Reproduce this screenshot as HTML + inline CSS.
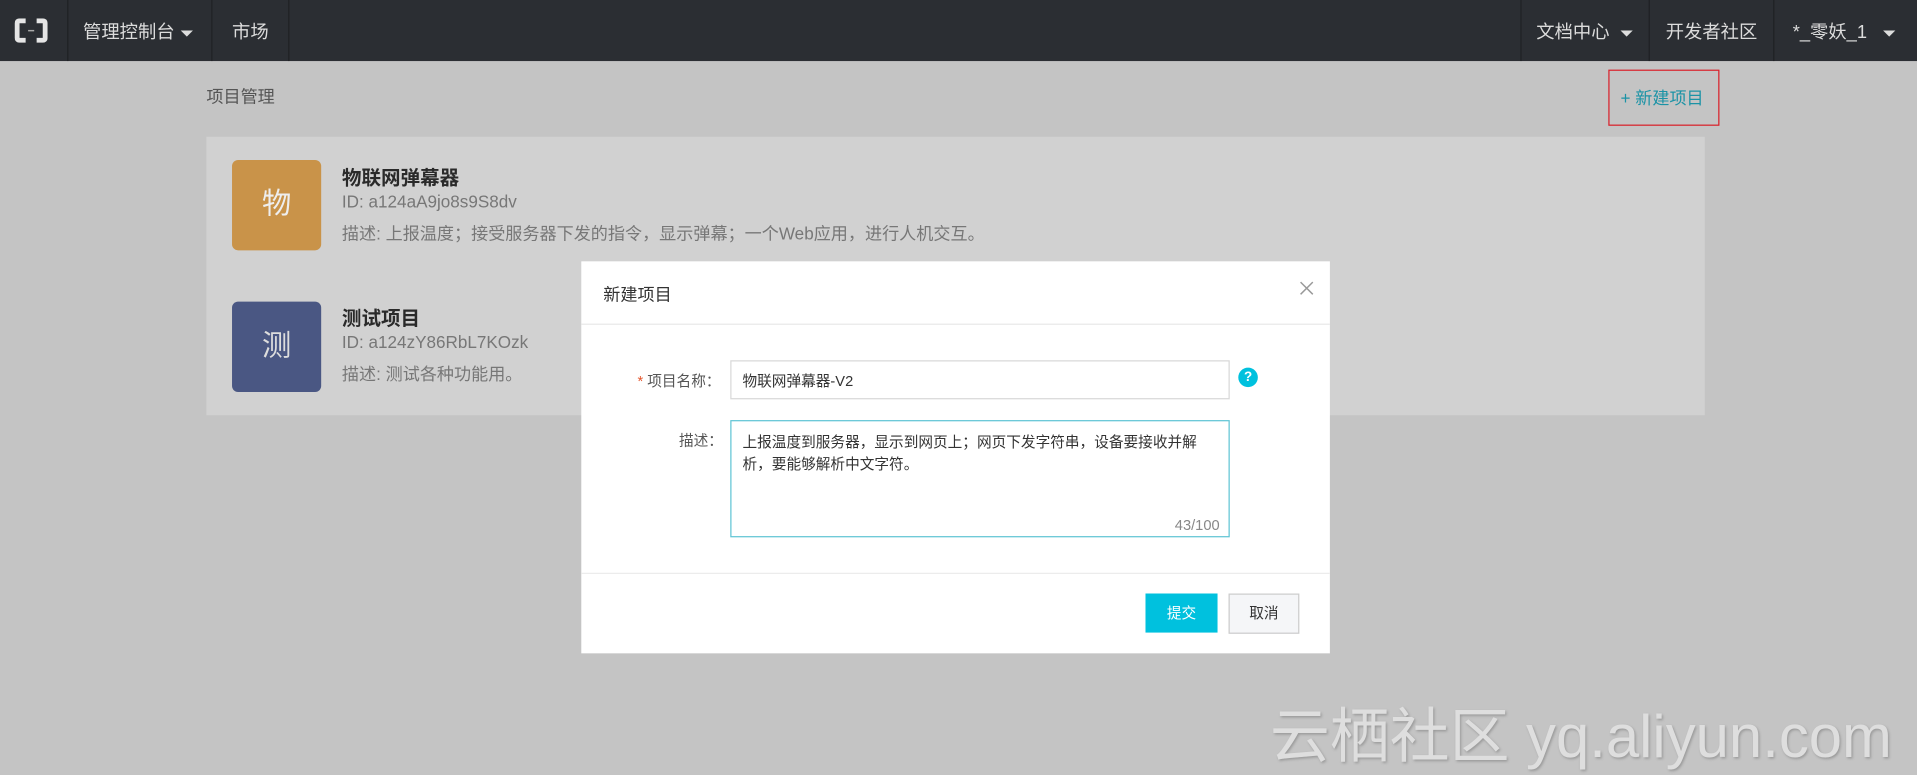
<!DOCTYPE html>
<html><head><meta charset="utf-8"><style>
html,body{margin:0;padding:0;width:1917px;height:766px;overflow:hidden;background:#c4c4c4}
#w{position:absolute;left:0;top:0;width:1570px;height:627px;transform:scale(1.2212);transform-origin:0 0;font-family:"Liberation Sans","Noto Sans CJK SC",sans-serif;background:#c4c4c4}
.a{position:absolute;white-space:nowrap}
.nav{position:absolute;left:0;top:0;width:1570px;height:50px;background:#2b2e33}
.sep{position:absolute;top:0;width:1px;height:50px;background:#1f2124}
.nt{position:absolute;top:15px;font-size:15px;color:#dcdcdc;white-space:nowrap}
.tri{display:inline-block;width:0;height:0;border-left:5px solid transparent;border-right:5px solid transparent;border-top:5px solid #ddd;vertical-align:middle;margin-left:5px}
</style></head><body><div id="w">
<div class="nav">
 <svg class="a" style="left:12px;top:15px" width="27" height="20" viewBox="0 0 27 20"><path d="M9 2H4Q2 2 2 4V16Q2 18 4 18H9M18 2H23Q25 2 25 4V16Q25 18 23 18H18" stroke="#e5e5e5" stroke-width="4" fill="none"/><rect x="11" y="9.5" width="5" height="1.2" fill="#aaa"/></svg>
 <div class="sep" style="left:55px"></div>
 <div class="nt" style="left:68px">管理控制台<span class="tri"></span></div>
 <div class="sep" style="left:173px"></div>
 <div class="nt" style="left:190px">市场</div>
 <div class="sep" style="left:236px"></div>
 <div class="sep" style="left:1245px"></div>
 <div class="nt" style="left:1258px">文档中心 <span class="tri"></span></div>
 <div class="sep" style="left:1350px"></div>
 <div class="nt" style="left:1364px">开发者社区</div>
 <div class="sep" style="left:1452px"></div>
 <div class="nt" style="left:1468px">*_零妖_1 &nbsp;<span class="tri"></span></div>
</div>
<div class="a" style="left:169px;top:69px;font-size:14px;color:#555">项目管理</div>
<div class="a" style="left:1317px;top:57px;width:89px;height:44px;border:1px solid #d9202a"></div>
<div class="a" style="left:1327px;top:70px;font-size:14px;color:#1b93a6">+ 新建项目</div>
<div class="a" style="left:169px;top:112px;width:1227px;height:228px;background:#d1d1d1"></div>
<div class="a" style="left:190px;top:131px;width:73px;height:74px;background:#c99349;border-radius:5px;color:#eee;font-size:24px;line-height:74px;text-align:center">物</div>
<div class="a" style="left:280px;top:132px;font-size:16px;font-weight:bold;color:#2a2a2a">物联网弹幕器</div>
<div class="a" style="left:280px;top:157px;font-size:14px;color:#777">ID: a124aA9jo8s9S8dv</div>
<div class="a" style="left:280px;top:181px;font-size:14px;color:#777">描述: 上报温度；接受服务器下发的指令，显示弹幕；一个Web应用，进行人机交互。</div>
<div class="a" style="left:190px;top:247px;width:73px;height:74px;background:#4a5783;border-radius:5px;color:#ddd;font-size:24px;line-height:74px;text-align:center">测</div>
<div class="a" style="left:280px;top:247px;font-size:16px;font-weight:bold;color:#2a2a2a">测试项目</div>
<div class="a" style="left:280px;top:272px;font-size:14px;color:#777">ID: a124zY86RbL7KOzk</div>
<div class="a" style="left:280px;top:296px;font-size:14px;color:#777">描述: 测试各种功能用。</div>

<div class="a" style="left:476px;top:214px;width:613px;height:321px;background:#fff"></div>
<div class="a" style="left:494px;top:231px;font-size:14px;color:#333">新建项目</div>
<svg class="a" style="left:1064px;top:230px" width="12" height="12"><path d="M1 1L11 11M11 1L1 11" stroke="#999" stroke-width="1.2"/></svg>
<div class="a" style="left:476px;top:265px;width:613px;height:1px;background:#e8e8e8"></div>
<div class="a" style="left:522px;top:303px;font-size:12px;color:#555"><span style="color:#e4572e">*</span> 项目名称：</div>
<div class="a" style="left:598px;top:295px;width:407px;height:30px;border:1px solid #d8d8d8"></div>
<div class="a" style="left:608px;top:303px;font-size:12px;color:#333">物联网弹幕器-V2</div>
<div class="a" style="left:1014px;top:301px;width:16px;height:16px;border-radius:50%;background:#00c1de;color:#fff;font-size:11px;font-weight:bold;line-height:16px;text-align:center">?</div>
<div class="a" style="left:556px;top:352px;font-size:12px;color:#555">描述：</div>
<div class="a" style="left:598px;top:344px;width:407px;height:94px;border:1px solid #5fc4d4"></div>
<div class="a" style="left:608px;top:353px;font-size:12px;color:#333;line-height:18px">上报温度到服务器，显示到网页上；网页下发字符串，设备要接收并解<br>析，要能够解析中文字符。</div>
<div class="a" style="left:962px;top:423px;font-size:12px;color:#888">43/100</div>
<div class="a" style="left:476px;top:469px;width:613px;height:1px;background:#ececec"></div>
<div class="a" style="left:938px;top:486px;width:59px;height:32px;background:#00c1de;color:#fff;font-size:12px;line-height:32px;text-align:center">提交</div>
<div class="a" style="left:1006px;top:486px;width:56px;height:31px;background:#f5f6f8;border:1px solid #ccc;color:#333;font-size:12px;line-height:31px;text-align:center">取消</div>
<div class="a" style="left:1040px;top:564px;font-size:49px;color:#dedede;text-shadow:1px 1px 2px #999">云栖社区 yq.aliyun.com</div>
</div></body></html>
